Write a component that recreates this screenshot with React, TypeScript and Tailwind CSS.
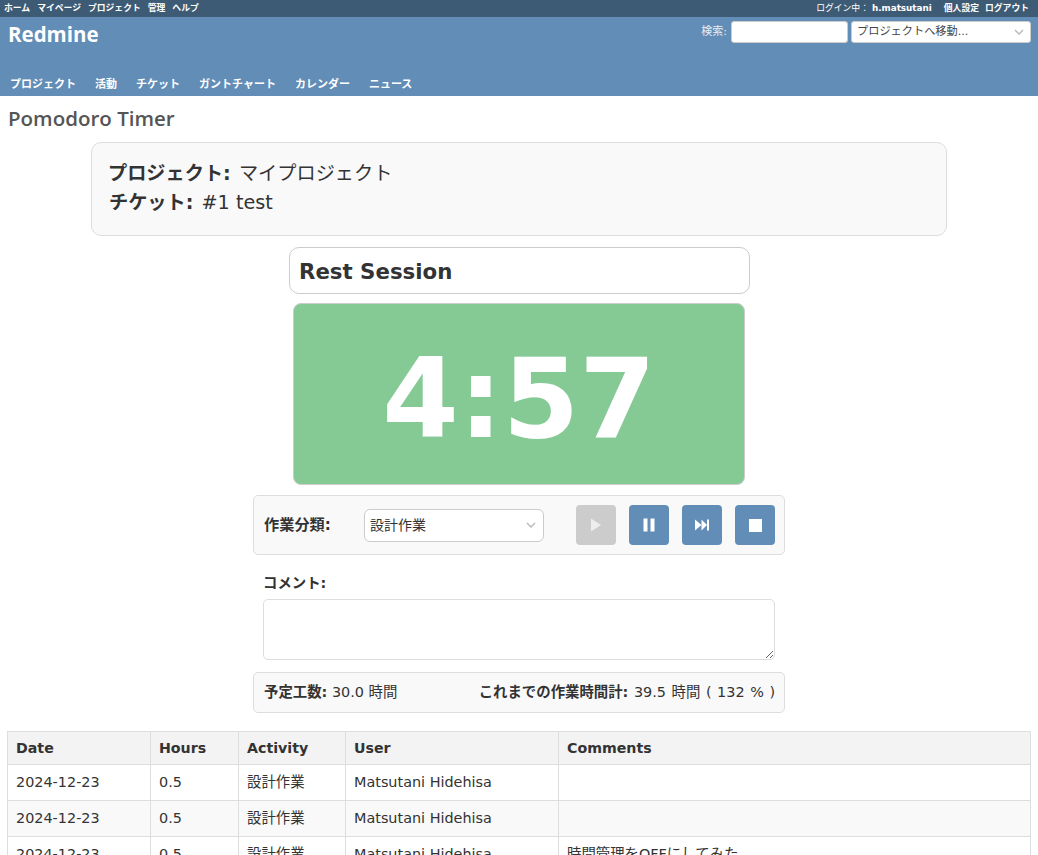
const jp = 'font-["DejaVu_Sans","Noto_Sans_CJK_JP",sans-serif]';

const topLeft = ['ホーム', 'マイページ', 'プロジェクト', '管理', 'ヘルプ'];
const tabs = ['プロジェクト', '活動', 'チケット', 'ガントチャート', 'カレンダー', 'ニュース'];

const entries = [
  { date: '2024-12-23', hours: '0.5', activity: '設計作業', user: 'Matsutani Hidehisa', comments: '' },
  { date: '2024-12-23', hours: '0.5', activity: '設計作業', user: 'Matsutani Hidehisa', comments: '' },
  { date: '2024-12-23', hours: '0.5', activity: '設計作業', user: 'Matsutani Hidehisa', comments: '時間管理をOFFにしてみた' },
];

function Chevron({ className }: { className: string }) {
  return (
    <svg className={className} width="10" height="6" viewBox="0 0 10 6" fill="none">
      <path d="M1 1l4 4 4-4" stroke="#bbb" strokeWidth="1.5" />
    </svg>
  );
}

function Header() {
  return (
    <header className="h-[96px] bg-[#628db6] text-white">
      {/* Top menu */}
      <div className="h-[17px] bg-[#3e5b76] flex items-center justify-between pl-[4px] pr-[9px] text-[8.8px] font-bold leading-none">
        <div className="flex gap-[7px]">
          {topLeft.map((t) => (
            <span key={t}>{t}</span>
          ))}
        </div>
        <div className="flex items-center">
          <span className="font-normal mr-[3px]">ログイン中：</span>
          <span>h.matsutani</span>
          <span className="ml-[12px]">個人設定</span>
          <span className="ml-[6px]">ログアウト</span>
        </div>
      </div>

      <div className="relative h-[79px]">
        <h1 className='pl-[8px] pt-[4px] text-[20.5px] leading-[27px] font-bold font-["Open_Sans",sans-serif]'>Redmine</h1>
        {/* Search */}
        <div className="absolute top-[4px] right-[7px] flex items-center text-[11px]">
          <span className="mr-[4px] text-[#e8eef4]">検索:</span>
          <div className="w-[117px] h-[22px] bg-white border border-[#ccc] rounded-[3px]" />
          <div className="ml-[3px] w-[180px] h-[22px] bg-white border border-[#ccc] rounded-[3px] flex items-center justify-between pl-[5px] pr-[6px] text-[#444] text-[11.2px]">
            <span>プロジェクトへ移動...</span>
            <Chevron className="shrink-0" />
          </div>
        </div>
        {/* Main menu */}
        <nav className="absolute left-[10px] top-[60px] flex gap-[19px] text-[11px] font-bold leading-[16px]">
          {tabs.map((t) => (
            <span key={t}>{t}</span>
          ))}
        </nav>
      </div>
    </header>
  );
}

function TimerControls() {
  return (
    <div className="mt-[10px] w-[532px] h-[60px] mx-auto bg-[#f9f9f9] border border-[#ddd] rounded-[5px] flex items-center pl-[10px] pr-[9px]">
      <span className="w-[100px] text-[15.2px] font-bold text-[#333]">作業分類:</span>
      <div className="w-[180px] h-[33px] bg-white border border-[#ccc] rounded-[6px] flex items-center justify-between pl-[5px] pr-[7px] text-[14px] text-[#333]">
        <span>設計作業</span>
        <Chevron className="shrink-0" />
      </div>
      <div className="ml-auto flex gap-[13px]">
        <button className="w-[40px] h-[40px] rounded-[4px] bg-[#cccccc] flex items-center justify-center">
          <svg width="12" height="14" viewBox="0 0 12 14"><path d="M1 0.500l10 6.500-10 6.500z" fill="#eee" /></svg>
        </button>
        <button className="w-[40px] h-[40px] rounded-[4px] bg-[#628db6] flex items-center justify-center">
          <svg width="12" height="14" viewBox="0 0 12 14" fill="#fff"><rect x="0.500" y="0.500" width="4" height="13" /><rect x="7.500" y="0.500" width="4" height="13" /></svg>
        </button>
        <button className="w-[40px] h-[40px] rounded-[4px] bg-[#628db6] flex items-center justify-center">
          <svg width="16" height="12" viewBox="0 0 16 12" fill="#fff"><path d="M1 0.500l6.500 5.500-6.500 5.500z" /><path d="M7.500 0.500l5.500 5.500-5.500 5.500z" /><rect x="13" y="0.500" width="2" height="11" /></svg>
        </button>
        <button className="w-[40px] h-[40px] rounded-[4px] bg-[#628db6] flex items-center justify-center">
          <svg width="13" height="13" viewBox="0 0 13 13"><rect width="13" height="13" fill="#fff" /></svg>
        </button>
      </div>
    </div>
  );
}

function WorkTable() {
  return (
    <table className="mt-[18px] w-[1024px] ml-[7px] table-fixed border-collapse text-[14.4px] text-[#333]">
      <colgroup>
        <col className="w-[143px]" />
        <col className="w-[88px]" />
        <col className="w-[107px]" />
        <col className="w-[213px]" />
        <col />
      </colgroup>
      <thead>
        <tr className="h-[33px] bg-[#f3f3f3] text-left">
          {['Date', 'Hours', 'Activity', 'User', 'Comments'].map((h) => (
            <th key={h} className="border border-[#ddd] px-[8px] pt-[2px] text-[14.2px] font-bold">{h}</th>
          ))}
        </tr>
      </thead>
      <tbody>
        {entries.map((e, i) => (
          <tr key={i} className={i % 2 === 1 ? 'h-[36px] bg-[#f9f9f9]' : 'h-[36px] bg-white'}>
            <td className="border border-[#ddd] px-[8px]">{e.date}</td>
            <td className="border border-[#ddd] px-[8px]">{e.hours}</td>
            <td className="border border-[#ddd] px-[8px]">{e.activity}</td>
            <td className="border border-[#ddd] px-[8px]">{e.user}</td>
            <td className="border border-[#ddd] px-[8px]">{e.comments}</td>
          </tr>
        ))}
      </tbody>
    </table>
  );
}

export default function App() {
  return (
    <div className={`h-[855px] overflow-hidden bg-white ${jp}`}>
      <Header />
      <h2 className='pl-[8px] pt-[8px] pb-[1px] text-[20.5px] leading-[28px] font-semibold text-[#555] font-["Open_Sans",sans-serif]'>Pomodoro Timer</h2>

      {/* Issue info */}
      <div className="mt-[9px] ml-[91px] w-[856px] h-[94px] bg-[#f9f9f9] border border-[#ddd] rounded-[10px] pl-[16px] pt-[16px] text-[19.2px] leading-[29px] text-[#333]">
        <div><span className="font-bold">プロジェクト:</span> <span className="ml-[2px]">マイプロジェクト</span></div>
        <div><span className="font-bold ml-[1px]">チケット:</span> <span className="ml-[2px]">#1 test</span></div>
      </div>

      {/* Timer */}
      <div className="mt-[11px] ml-[289px] w-[461px] h-[47px] bg-white border border-[#ccc] rounded-[10px] flex items-center pl-[9px] pt-[3px] text-[21.3px] font-bold text-[#333]">
        Rest Session
      </div>
      <div className="mt-[9px] ml-[293px] w-[452px] h-[182px] bg-[#85c995] border border-[#ccc] rounded-[8px] flex items-center justify-center pt-[10px] text-[110px] font-bold text-white leading-none">
        4:57
      </div>

      <TimerControls />

      <div className="mt-[18px] ml-[263px] text-[14.4px] font-bold text-[#333] leading-[20px]">コメント:</div>
      <textarea className="block mt-[6px] ml-[263px] w-[512px] h-[61px] bg-white border border-[#ddd] rounded-[5px]" />

      {/* Totals */}
      <div className="mt-[12px] mx-auto w-[532px] h-[41px] bg-[#f9f9f9] border border-[#ddd] rounded-[5px] flex items-center justify-between pl-[10px] pr-[9px] text-[14.4px] text-[#333]">
        <span><b>予定工数:</b> 30.0 時間</span>
        <span className="[word-spacing:1px]"><b>これまでの作業時間計:</b> 39.5 時間 ( 132 % )</span>
      </div>

      <WorkTable />
    </div>
  );
}
